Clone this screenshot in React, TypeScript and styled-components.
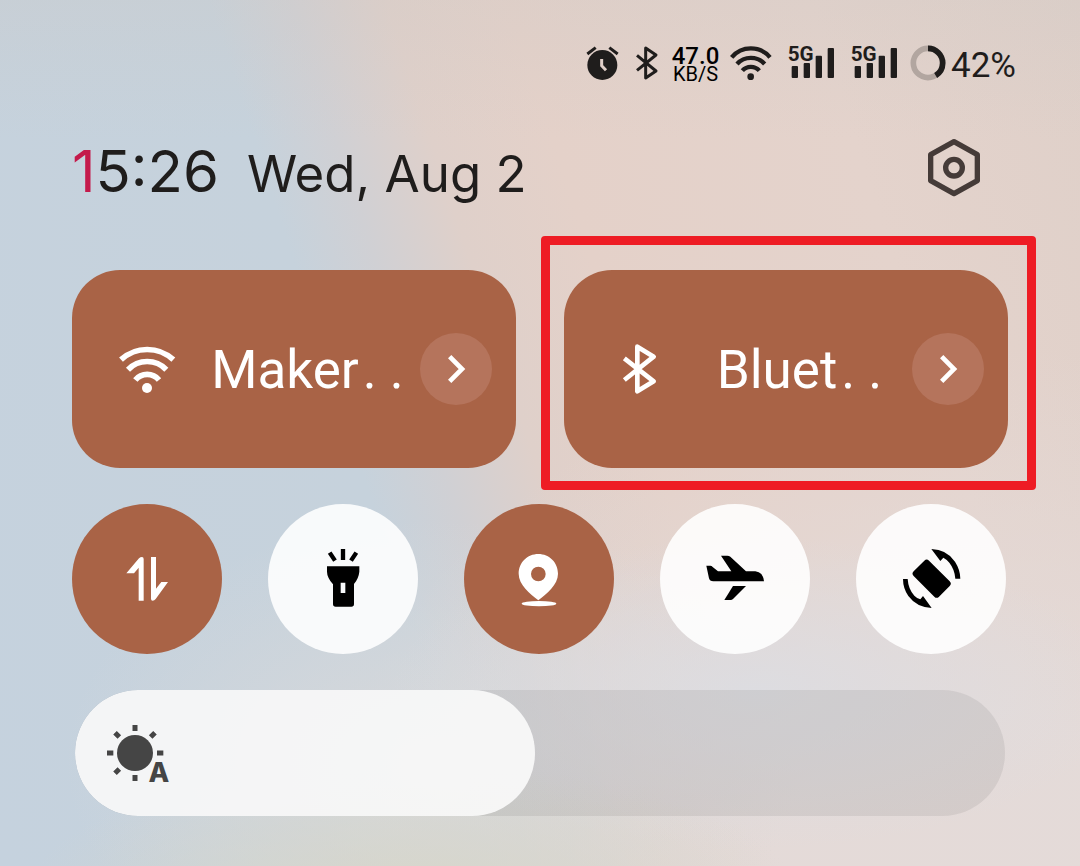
import React, { useState } from "react";
import styled, { createGlobalStyle } from "styled-components";

const GlobalStyle = createGlobalStyle`
  *, *::before, *::after { box-sizing: border-box; }
  body {
    margin: 0;
    font-family: Roboto, "Liberation Sans", sans-serif;
    color: #1f1d1c;
  }
  button { font: inherit; color: inherit; border: 0; padding: 0; background: none; cursor: pointer; }
  svg { display: block; flex: none; overflow: visible; }
`;

const Shade = styled.main`
  min-height: 100vh;
  padding: 40px 72px 50px;
  background:
    radial-gradient(ellipse 36% 16% at 38% 104%, rgba(216, 214, 200, 0.95), rgba(216, 214, 200, 0) 100%),
    radial-gradient(ellipse 34% 18% at 70% 80%, rgba(220, 221, 226, 0.9), rgba(220, 221, 226, 0) 100%),
    radial-gradient(ellipse 34% 28% at 40% 88%, rgba(217, 217, 218, 0.95), rgba(217, 217, 218, 0) 100%),
    linear-gradient(180deg, rgba(205, 200, 196, 0.28) 0%, rgba(205, 200, 196, 0) 16%),
    radial-gradient(ellipse 60% 60% at 90% 100%, rgba(228, 219, 217, 0.95) 30%, rgba(228, 219, 217, 0) 100%),
    linear-gradient(72deg, #c5d2de 0%, #c6d2dc 36%, #d0d0d4 42%, #dfd0ca 49%, #e4d1c9 58%, #e4d3cc 80%, #dfd0c9 100%);
`;

const StatusBar = styled.header`
  display: flex;
  justify-content: flex-end;
  align-items: center;
  gap: 12px;
  height: 48px;
  margin-right: -8px;
`;

const NetSpeed = styled.div`
  width: 45px;
  display: flex;
  flex-direction: column;
  align-items: center;
  color: #000;
  font-weight: 500;
  font-size: 24px;
  line-height: 20px;
  white-space: nowrap;
`;

const SpeedUnit = styled.span`
  font-size: 20px;
  font-weight: 400;
  line-height: 16px;
`;

const Battery = styled.div`
  display: flex;
  align-items: center;
  gap: 5px;
  font-size: 35px;
  line-height: 40px;
`;

const BatteryText = styled.span`
  padding-top: 4px;
`;

const HeaderRow = styled.section`
  display: flex;
  align-items: center;
  justify-content: space-between;
  height: 84px;
  margin: 38px 27px 60px 0;
`;

const ClockLine = styled.div`
  display: flex;
  align-items: baseline;
  gap: 28px;
  padding-top: 8px;
  white-space: nowrap;
`;

const Clock = styled.time`
  font-family: Inter, Roboto, sans-serif;
  font-size: 58px;
  line-height: 72px;
  font-weight: 400;
`;

const ClockAccent = styled.span`
  color: #c41a4b;
`;

const DateText = styled.span`
  font-family: Inter, Roboto, sans-serif;
  font-size: 51px;
  line-height: 72px;
  font-weight: 400;
`;

const TileRow = styled.section`
  display: grid;
  grid-template-columns: 1fr 1fr;
  gap: 48px;
`;

const Tile = styled.div`
  position: relative;
  display: flex;
  align-items: center;
  height: 198px;
  padding-right: 24px;
  border-radius: 48px;
  background: #a96346;
  color: #fff;
`;

const TileToggle = styled.button`
  flex: 1;
  min-width: 0;
  height: 100%;
  display: flex;
  align-items: center;
  padding-left: 27px;
`;

const TileIcon = styled.span`
  width: 96px;
  display: flex;
  justify-content: center;
`;

const TileLabel = styled.span`
  flex: 1;
  display: flex;
  justify-content: center;
  gap: 4px;
  padding-top: 2px;
  font-size: 53px;
  line-height: 64px;
  font-weight: 400;
  white-space: nowrap;
`;

const TileMore = styled.button`
  flex: none;
  display: grid;
  place-items: center;
  width: 72px;
  height: 72px;
  border-radius: 50%;
  background: #b5745c;
`;

const Highlight = styled.div`
  position: absolute;
  inset: -34px -28px -22px -23px;
  border: 9px solid #ee1c24;
  border-radius: 4px;
  pointer-events: none;
`;

const ToggleRow = styled.section`
  display: flex;
  justify-content: space-between;
  margin: 36px 2px 36px 0;
`;

const RoundToggle = styled.button<{ $on?: boolean }>`
  display: grid;
  place-items: center;
  width: 150px;
  height: 150px;
  border-radius: 50%;
  color: ${(p) => (p.$on ? "#fff" : "#000")};
  background: ${(p) => (p.$on ? "#a96346" : "rgba(255, 255, 255, 0.88)")};
`;

const Slider = styled.label`
  display: grid;
  height: 126px;
  margin: 0 3px;
  border-radius: 63px;
  overflow: hidden;
  background: rgba(60, 60, 50, 0.09);
  & > * { grid-area: 1 / 1; }
`;

const SliderFill = styled.span`
  display: flex;
  align-items: center;
  padding-left: 29px;
  border-radius: 63px;
  background: rgba(252, 252, 252, 0.88);
  color: #454545;
`;

const SliderInput = styled.input`
  width: 100%;
  height: 100%;
  margin: 0;
  opacity: 0;
  cursor: pointer;
`;

const AlarmIcon = () => (
  <svg width="37" height="36" viewBox="44 48 111 108" fill="none" stroke="currentColor" strokeWidth="9">
    <circle cx="99" cy="105" r="45" fill="currentColor" stroke="none" />
    <path d="M54 72L79 53M120 53L145 72" />
    <path d="M97 87V107L110 121" stroke="#e0cfc8" />
  </svg>
);

const StatusBluetoothIcon = () => (
  <svg width="28" height="36" viewBox="191 48 84 108" fill="none" stroke="currentColor" strokeWidth="9" strokeLinejoin="round">
    <path d="M203 76L260 123L229 144V54L260 75L203 121" />
  </svg>
);

const StatusWifiIcon = () => (
  <svg width="42" height="36" viewBox="482 45 126 108" fill="none" stroke="currentColor" strokeWidth="13">
    <path d="M487 79A75 75 0 0 1 602 79M503 99A56 56 0 0 1 586 99M519 119A34 34 0 0 1 570 119" />
    <circle cx="544" cy="137" r="10" fill="currentColor" stroke="none" />
  </svg>
);

const SignalIcon = () => (
  <svg width="51" height="48" viewBox="14 30 153 144" fill="currentColor">
    <text x="25" y="93" fontFamily='"Liberation Sans Narrow", Roboto, sans-serif' fontWeight="700" fontSize="62">5G</text>
    <rect x="37" y="108" width="19" height="36" rx="3" />
    <rect x="73" y="99" width="19" height="45" rx="3" />
    <rect x="109" y="77" width="19" height="67" rx="3" />
    <rect x="145" y="54" width="19" height="90" rx="3" />
  </svg>
);

const BatteryRing = () => (
  <svg width="36" height="36" viewBox="385 46 108 108" fill="none" strokeWidth="17">
    <circle cx="439" cy="97" r="44" stroke="#b2a6a0" />
    <circle cx="439" cy="97" r="44" stroke="currentColor" pathLength="100" strokeDasharray="41 59" transform="rotate(-90 439 97)" />
  </svg>
);

const SettingsIcon = () => (
  <svg width="54" height="60" viewBox="51 25 162 180" fill="none" stroke="#453b38" strokeWidth="16" strokeLinejoin="round">
    <path d="M132 36L202 75V153L132 192L62 153V75Z" />
    <circle cx="132" cy="114" r="25" />
  </svg>
);

const WifiIcon = () => (
  <svg width="58" height="50" viewBox="54 72 174 150" fill="none" stroke="currentColor" strokeWidth="17">
    <path d="M63 119A116 116 0 0 1 220 119M84 149A80 80 0 0 1 199 149M106 180A46 46 0 0 1 177 180" />
    <circle cx="141" cy="204" r="15" fill="currentColor" stroke="none" />
  </svg>
);

const BluetoothIcon = () => (
  <svg width="35" height="52" viewBox="66 69 105 156" fill="none" stroke="currentColor" strokeWidth="14" strokeLinejoin="round">
    <path d="M73 115L161 184L112 214V80L161 110L73 180" />
  </svg>
);

const ChevronIcon = () => (
  <svg width="36" height="36" viewBox="1014 93 108 108" fill="none" stroke="currentColor" strokeWidth="14">
    <path d="M1049 110L1086 147L1049 184" />
  </svg>
);

const DataIcon = () => (
  <svg width="66" height="66" viewBox="42 48 198 198" fill="currentColor">
    <path d="M79 130L117 85Q121 81 126 81Q131 81 131 87V212H116V113L102 130Z" />
    <path d="M153 81H168V176L184 156H204L167 207Q163 212 158 212Q153 212 153 206Z" />
  </svg>
);

const TorchIcon = () => (
  <svg width="66" height="66" viewBox="630 48 198 198" fill="currentColor">
    <path
      fillRule="evenodd"
      d="M681 109H778V125Q776 145 762 162V222Q762 230 754 230H707Q699 230 699 222V163Q681 142 681 125ZM722 158V189H736V158Z"
    />
    <path d="M729 57V90M689 68L705 92M769 68L753 92" stroke="currentColor" strokeWidth="13" />
  </svg>
);

const LocationIcon = () => (
  <svg width="66" height="66" viewBox="48 48 198 198" fill="currentColor">
    <path
      fillRule="evenodd"
      d="M145 72C178 72 204 98 204 131C204 165 170 190 145 211C120 190 86 165 86 131C86 98 112 72 145 72ZM145 110A22 22 0 1 0 145 154A22 22 0 1 0 145 110Z"
    />
    <ellipse cx="147" cy="221" rx="52" ry="8" />
  </svg>
);

const PlaneIcon = () => (
  <svg width="66" height="66" viewBox="636 48 198 198" fill="currentColor">
    <path d="M649 107H661Q665 107 668 111L684 124H724L693 77H712Q717 77 721 80L768 124H796Q819 126 822 154H670Q659 154 657 145Z" />
    <path d="M729 168H768L729 207Q726 210 722 210H703Z" />
  </svg>
);

const RotateIcon = () => (
  <svg width="66" height="66" viewBox="54 48 198 198" fill="currentColor">
    <path d="M108 131L140 99L202 161L170 193Z" stroke="currentColor" strokeWidth="20" strokeLinejoin="round" />
    <path d="M154 57Q200 58 225 95Q241 120 241 146H226Q224 118 208 98Q200 88 190 83L181 93Z" />
    <path d="M69 147H83Q85 178 103 197Q112 206 121 208L129 198L155 234Q110 232 85 198Q69 175 69 147Z" />
  </svg>
);

const BrightnessIcon = () => (
  <svg width="66" height="76" viewBox="42 15 198 228" fill="currentColor">
    <circle cx="135" cy="129" r="54" />
    <path
      d="M135 45V63M135 195V213M51 129H70M201 129H220M75 68L88 81M195 68L182 81M75 190L88 177"
      stroke="currentColor"
      strokeWidth="15"
    />
    <text x="207" y="217" textAnchor="middle" fontFamily="Inter, Roboto, sans-serif" fontWeight="800" fontSize="81">A</text>
  </svg>
);

interface TileProps {
  icon: React.ReactNode;
  name: string;
  highlighted?: boolean;
}

const ConnectionTile = ({ icon, name, highlighted }: TileProps) => (
  <Tile>
    <TileToggle aria-pressed="true">
      <TileIcon>{icon}</TileIcon>
      <TileLabel>
        <span>{name}</span>
        <span>. .</span>
      </TileLabel>
    </TileToggle>
    <TileMore aria-label={`${name} details`}>
      <ChevronIcon />
    </TileMore>
    {highlighted && <Highlight />}
  </Tile>
);

const toggles = [
  { label: "Mobile data", icon: <DataIcon />, on: true },
  { label: "Flashlight", icon: <TorchIcon />, on: false },
  { label: "Location", icon: <LocationIcon />, on: true },
  { label: "Airplane mode", icon: <PlaneIcon />, on: false },
  { label: "Auto-rotate", icon: <RotateIcon />, on: false },
];

const SLIDER_MAX = 200;

export default function App() {
  const [brightness, setBrightness] = useState(99);

  return (
    <>
      <GlobalStyle />
      <Shade>
        <StatusBar>
          <AlarmIcon />
          <StatusBluetoothIcon />
          <NetSpeed>
            47.0
            <SpeedUnit>KB/S</SpeedUnit>
          </NetSpeed>
          <StatusWifiIcon />
          <SignalIcon />
          <SignalIcon />
          <Battery>
            <BatteryRing />
            <BatteryText>42%</BatteryText>
          </Battery>
        </StatusBar>

        <HeaderRow>
          <ClockLine>
            <Clock>
              <ClockAccent>1</ClockAccent>5:26
            </Clock>
            <DateText>Wed, Aug 2</DateText>
          </ClockLine>
          <button aria-label="Settings">
            <SettingsIcon />
          </button>
        </HeaderRow>

        <TileRow>
          <ConnectionTile icon={<WifiIcon />} name="Maker" />
          <ConnectionTile icon={<BluetoothIcon />} name="Bluet" highlighted />
        </TileRow>

        <ToggleRow>
          {toggles.map((t) => (
            <RoundToggle key={t.label} $on={t.on} aria-label={t.label} aria-pressed={t.on}>
              {t.icon}
            </RoundToggle>
          ))}
        </ToggleRow>

        <Slider>
          <SliderFill style={{ width: `${(brightness / SLIDER_MAX) * 100}%` }}>
            <BrightnessIcon />
          </SliderFill>
          <SliderInput
            type="range"
            aria-label="Brightness"
            min={0}
            max={SLIDER_MAX}
            value={brightness}
            onChange={(e) => setBrightness(Number(e.target.value))}
          />
        </Slider>
      </Shade>
    </>
  );
}
